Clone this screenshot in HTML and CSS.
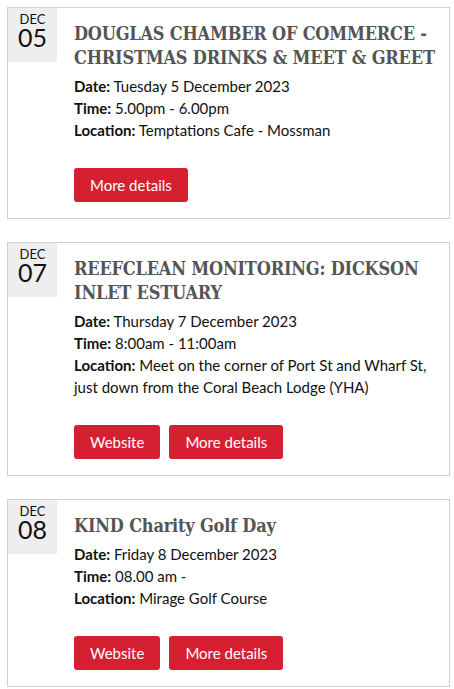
FILE: index.html
```html
<!DOCTYPE html>
<html>
<head>
<meta charset="utf-8">
<link rel="stylesheet" href="styles.css">
</head>
<body>
<div class="events">
  <div class="event">
    <div class="date"><span class="mon">DEC</span><span class="day">05</span></div>
    <div class="info">
      <h2 class="title">DOUGLAS CHAMBER OF COMMERCE - CHRISTMAS DRINKS &amp; MEET &amp; GREET</h2>
      <div class="meta">
        <div><b>Date:</b> Tuesday 5 December 2023</div>
        <div><b>Time:</b> 5.00pm - 6.00pm</div>
        <div><b>Location:</b> Temptations Cafe - Mossman</div>
      </div>
      <div class="actions"><a class="btn" href="#">More details</a></div>
    </div>
  </div>
  <div class="event">
    <div class="date"><span class="mon">DEC</span><span class="day">07</span></div>
    <div class="info">
      <h2 class="title">REEFCLEAN MONITORING: DICKSON INLET ESTUARY</h2>
      <div class="meta">
        <div><b>Date:</b> Thursday 7 December 2023</div>
        <div><b>Time:</b> 8:00am - 11:00am</div>
        <div><b>Location:</b> Meet on the corner of Port St and Wharf St, just down from the Coral Beach Lodge (YHA)</div>
      </div>
      <div class="actions"><a class="btn" href="#">Website</a><a class="btn" href="#">More details</a></div>
    </div>
  </div>
  <div class="event">
    <div class="date"><span class="mon">DEC</span><span class="day">08</span></div>
    <div class="info">
      <h2 class="title">KIND Charity Golf Day</h2>
      <div class="meta">
        <div><b>Date:</b> Friday 8 December 2023</div>
        <div><b>Time:</b> 08.00 am -</div>
        <div><b>Location:</b> Mirage Golf Course</div>
      </div>
      <div class="actions"><a class="btn" href="#">Website</a><a class="btn" href="#">More details</a></div>
    </div>
  </div>
</div>
</body>
</html>
```
FILE: styles.css
```css
html, body {
  background: #fff;
}
body {
  margin: 7px 4px 0 7px;
  font-family: Lato, "Liberation Sans", sans-serif;
  color: #111;
}
.events {
  display: flex;
  flex-direction: column;
  gap: 23px;
}
.event {
  display: flex;
  align-items: flex-start;
  border: 1px solid #cfcfcf;
}
.date {
  flex: 0 0 49px;
  height: 54px;
  background: #eeeeee;
  display: flex;
  flex-direction: column;
  align-items: center;
  padding-top: 5px;
  box-sizing: border-box;
}
.mon {
  font-size: 13px;
  line-height: 13px;
}
.day {
  font-size: 25px;
  line-height: 22px;
}
.info {
  flex: 1;
  padding: 14px 8px 16px 17px;
}
.title {
  margin: 0 0 5px;
  font-family: "DejaVu Serif", serif;
  font-stretch: condensed;
  font-weight: bold;
  font-size: 18px;
  line-height: 24px;
  letter-spacing: -0.2px;
  color: #555555;
}
.meta {
  font-size: 15px;
  line-height: 22px;
  margin-bottom: 27px;
}
.meta b {
  font-weight: bold;
}
.actions {
  display: flex;
  gap: 9px;
}
.btn {
  display: block;
  height: 34px;
  line-height: 34px;
  padding: 0 16px;
  background: #d61f31;
  color: #fff;
  text-decoration: none;
  font-size: 15px;
  border-radius: 3px;
}
```
